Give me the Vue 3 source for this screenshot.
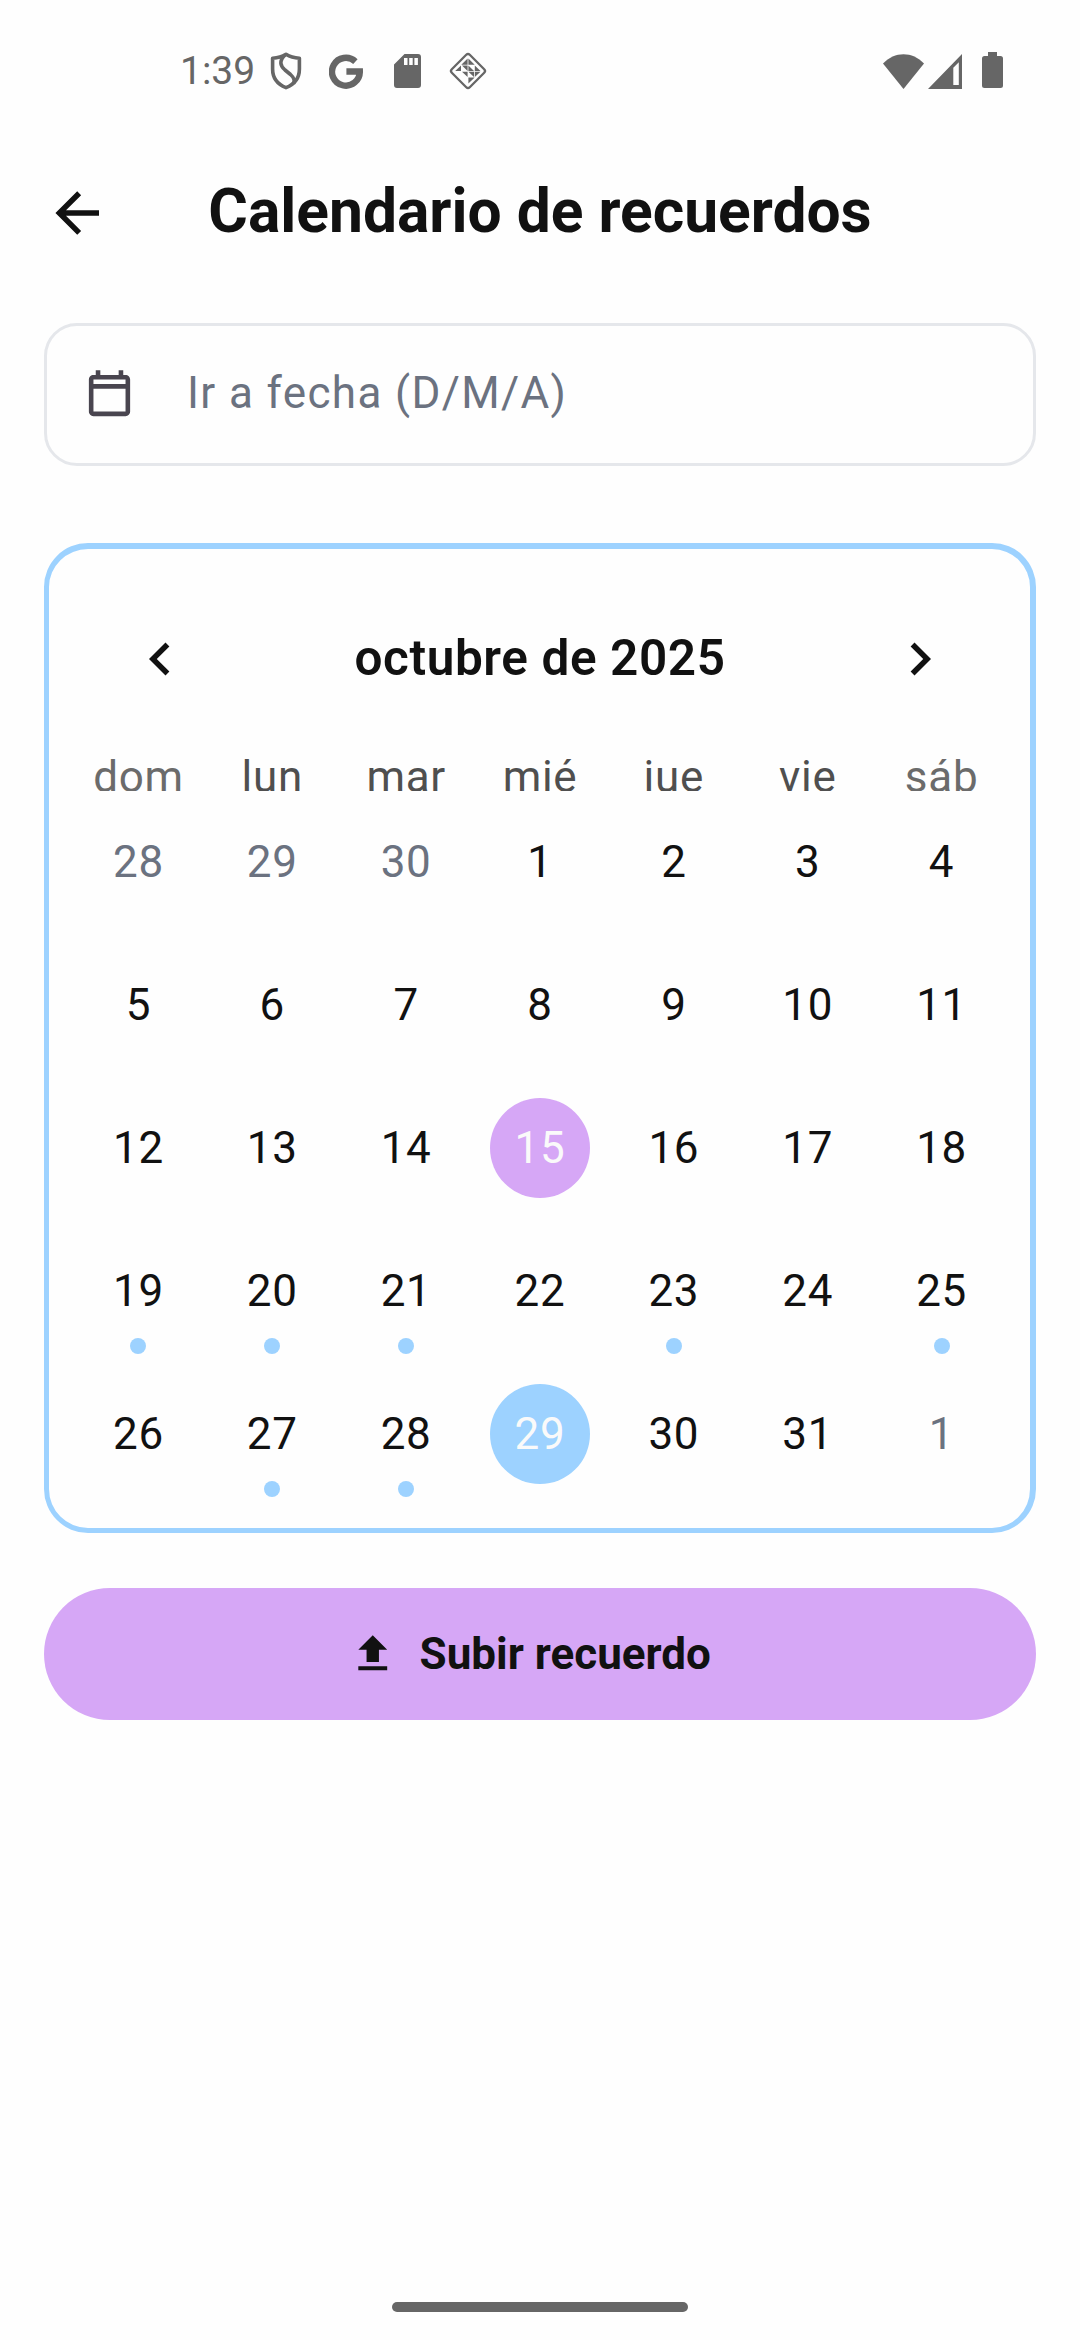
<script setup>
const weekdays = [
  { label: 'dom', weekend: true },
  { label: 'lun' },
  { label: 'mar' },
  { label: 'mié' },
  { label: 'jue' },
  { label: 'vie' },
  { label: 'sáb', weekend: true },
]

const marked = [19, 20, 21, 23, 25, 27, 28]
const today = 29
const selected = 15

const days = [
  ...[28, 29, 30].map((n) => ({ key: 'p' + n, n, outside: true })),
  ...Array.from({ length: 31 }, (_, i) => ({
    key: 'd' + (i + 1),
    n: i + 1,
    marked: marked.includes(i + 1),
    today: i + 1 === today,
    selected: i + 1 === selected,
  })),
  { key: 'n1', n: 1, outside: true },
]
</script>

<template>
  <div class="screen">
    <div class="status">
      <span class="time">1:39</span>
      <svg class="shield" width="32" height="38" viewBox="0 0 32 38" fill="none" stroke="#666" stroke-width="3.6" stroke-linejoin="round">
        <path d="M16 2.3C12 4.8 7.500 6 2.600 6.300V17C2.600 26 8 32.500 16 35.700C24 32.500 29.400 26 29.400 17V6.300C24.500 6 20 4.800 16 2.300Z" />
        <path d="M15 3C9 9 10 13.500 15 18L20.500 22.500C25 26.500 24.500 29 23.500 31.500" />
      </svg>
      <svg class="google" width="34" height="35" viewBox="0 0 34 35" fill="none" stroke="#666" stroke-width="6.4">
        <path d="M26.400 7.600A13.900 13.900 0 1 0 30.800 17.500H17.400" />
      </svg>
      <svg class="sd" width="27" height="34" viewBox="0 0 27 34">
        <path fill="#666" fill-rule="evenodd" d="M10.500 0H24Q27 0 27 3V31Q27 34 24 34H3Q0 34 0 31V10.500ZM10 4V11H13.500V4ZM15.200 4V11H18.700V4ZM20.400 4V11H23.900V4Z" />
      </svg>
      <svg class="diamond" width="40" height="40" viewBox="0 0 40 40">
        <rect x="7.300" y="7.300" width="25.400" height="25.400" rx="2.500" transform="rotate(45 20 20)" fill="none" stroke="#666" stroke-width="2.300" />
        <path fill="#666" d="M19.600 7.500V13.800H13.300ZM20.400 13.800V7.500L26.700 13.800ZM13 14.500V20H7.200ZM14 14.500H19.600V20ZM20.400 14.500L26 20H20.400ZM26.800 14.500L32.500 20H26.800ZM14 20.700H19.600V26ZM20.400 20.700H26V26ZM26.800 20.700H32.500L26.800 26ZM20.400 26.500H26.700L20.400 32.500Z" />
      </svg>
      <span class="spacer"></span>
      <svg class="wifi" width="41" height="35" viewBox="0 0 41 35">
        <path fill="#666" d="M0 9.500C11.500 -3 29.500 -3 41 9.500L20.500 35Z" />
      </svg>
      <svg class="signal" width="34" height="35" viewBox="0 0 34 35">
        <path fill="#666" fill-rule="evenodd" d="M34 0V35H0ZM30.800 8.300L25.300 13.800V31H30.800Z" />
      </svg>
      <svg class="battery" width="21" height="36" viewBox="0 0 21 36">
        <path fill="#666" d="M6 0H15V4H18.500Q21 4 21 6.500V33.500Q21 36 18.500 36H2.500Q0 36 0 33.500V6.500Q0 4 2.500 4H6Z" />
      </svg>
    </div>

    <header class="header">
      <svg width="66" height="66" viewBox="0 0 24 24" fill="#111">
        <path d="M20,11V13H8L13.5,18.5L12.08,19.92L4.16,12L12.08,4.08L13.5,5.5L8,11H20Z" />
      </svg>
      <h1>Calendario de recuerdos</h1>
      <span class="header-end"></span>
    </header>

    <div class="field">
      <svg width="55" height="55" viewBox="0 0 24 24" fill="#49454f">
        <path d="M19 3H18V1H16V3H8V1H6V3H5C3.89 3 3 3.9 3 5V19C3 20.11 3.9 21 5 21H19C20.11 21 21 20.11 21 19V5C21 3.9 20.11 3 19 3M19 19H5V9H19V19M5 7V5H19V7H5Z" />
      </svg>
      <span>Ir a fecha (D/M/A)</span>
    </div>

    <section class="card">
      <div class="month">
        <svg width="66" height="66" viewBox="0 0 24 24" fill="#111">
          <path d="M15.41,16.58L10.83,12L15.41,7.41L14,6L8,12L14,18L15.41,16.58Z" />
        </svg>
        <span>octubre de 2025</span>
        <svg width="66" height="66" viewBox="0 0 24 24" fill="#111">
          <path d="M8.59,16.58L13.17,12L8.59,7.41L10,6L16,12L10,18L8.59,16.58Z" />
        </svg>
      </div>
      <div class="weekdays">
        <span v-for="d in weekdays" :key="d.label" :class="{ weekend: d.weekend }">{{ d.label }}</span>
      </div>
      <div class="days">
        <div v-for="d in days" :key="d.key" class="cell">
          <span class="day" :class="{ outside: d.outside, today: d.today, selected: d.selected }">{{ d.n }}</span>
          <i v-if="d.marked" class="dot"></i>
        </div>
      </div>
    </section>

    <div class="upload">
      <svg width="49.5" height="49.5" viewBox="0 0 24 24" fill="#111">
        <path d="M9,16V10H5L12,3L19,10H15V16H9M5,20V18H19V20H5Z" />
      </svg>
      <span>Subir recuerdo</span>
    </div>

    <div class="nav"></div>
  </div>
</template>

<style>
body {
  background: #fefefe;
}
</style>

<style scoped>
.screen {
  box-sizing: border-box;
  width: 1080px;
  height: 2340px;
  background: #fefefe;
  color: #111;
  font-family: Roboto, sans-serif;
  font-size: 44px;
  display: flex;
  flex-direction: column;
  overflow: hidden;
}
svg {
  display: block;
  flex: none;
}
.status {
  display: flex;
  align-items: center;
  height: 142px;
  padding: 0 77px 0 180px;
  color: #666;
}
.time {
  width: 90px;
  font-size: 39px;
  line-height: 46px;
  white-space: nowrap;
}
.google {
  margin-left: 27px;
}
.sd {
  margin-left: 31px;
}
.diamond {
  margin-left: 27px;
}
.spacer {
  flex: 1;
}
.signal {
  margin-left: 4px;
}
.battery {
  margin-left: 20px;
  margin-top: -2px;
}
.header {
  display: flex;
  align-items: center;
  justify-content: space-between;
  height: 142px;
  padding: 0 44px;
}
.header-end {
  width: 66px;
}
h1 {
  margin: -2px 0 0;
  font-size: 60.5px;
  font-weight: 700;
  line-height: 72px;
  white-space: nowrap;
}
.field {
  box-sizing: border-box;
  display: flex;
  align-items: center;
  height: 143px;
  margin: 39px 44px 0;
  padding-left: 35px;
  border: 3px solid #e5e7eb;
  border-radius: 33px;
  color: #6b7280;
  letter-spacing: 1.375px;
}
.field svg {
  margin-top: 1px;
}
.field span {
  margin: 0 0 3px 50px;
  line-height: 52px;
}
.card {
  box-sizing: border-box;
  height: 990px;
  margin: 77px 44px 0;
  padding: 0 21.5px 0 22.5px;
  border: solid #9dd2ff;
  border-width: 6px 6px 5px 5px;
  border-radius: 44px;
}
.month {
  display: flex;
  align-items: center;
  justify-content: space-between;
  height: 66px;
  margin-top: 77px;
  padding: 0 55px;
  font-size: 49.5px;
  font-weight: 600;
  letter-spacing: 0.6px;
}
.month span {
  margin-top: -3px;
}
.weekdays {
  display: grid;
  grid-template-columns: repeat(7, 1fr);
  height: 32px;
  margin-top: 67px;
  overflow: hidden;
  text-align: center;
  line-height: 36px;
  letter-spacing: 0.6875px;
  color: #4f4f4f;
}
.weekdays .weekend {
  color: #6b6b6b;
}
.days {
  display: grid;
  grid-template-columns: repeat(7, 1fr);
  grid-auto-rows: 143px;
  margin-top: 21px;
}
.cell {
  display: flex;
  flex-direction: column;
  align-items: center;
}
.day {
  box-sizing: border-box;
  width: 100px;
  height: 100px;
  border-radius: 50%;
  text-align: center;
  line-height: 100px;
  letter-spacing: 0.6875px;
}
.outside {
  color: #6b7280;
}
.selected {
  background: #d6a7f6;
  color: #fafafa;
}
.today {
  background: #9dd2ff;
  color: #fafafa;
}
.dot {
  width: 16px;
  height: 16px;
  margin-top: -3px;
  border-radius: 50%;
  background: #9dd2ff;
}
.upload {
  display: flex;
  align-items: center;
  justify-content: center;
  height: 132px;
  margin: 55px 44px 0;
  padding-right: 21px;
  border-radius: 66px;
  background: #d6a7f6;
  font-weight: 700;
  gap: 22px;
}
.nav {
  width: 296px;
  height: 10px;
  margin: auto auto 28px;
  border-radius: 5px;
  background: #666;
}
</style>
